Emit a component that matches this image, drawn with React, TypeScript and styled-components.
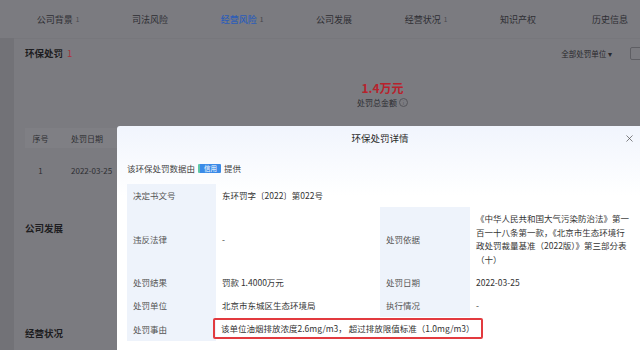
import { X } from "lucide-react"
import styled, { createGlobalStyle } from "styled-components"

const tabs = [
  { name: "公司背景", count: 1 },
  { name: "司法风险" },
  { name: "经营风险", count: 1, active: true },
  { name: "公司发展" },
  { name: "经营状况", count: 1 },
  { name: "知识产权" },
  { name: "历史信息" },
]

const basis =
  "《中华人民共和国大气污染防治法》第一百一十八条第一款，《北京市生态环境行政处罚裁量基准（2022版）》第三部分表（十）"

const App = () => {
  return (
    <Page>
      <GlobalStyle />
      <TabBar>
        {tabs.map(tab => (
          <Tab key={tab.name} $active={tab.active}>
            {tab.name}
            {tab.count && <TabCount>{tab.count}</TabCount>}
          </Tab>
        ))}
      </TabBar>

      <Main>
        <Card>
          <HeadRow>
            <SectionTitle>
              环保处罚<RedCount>1</RedCount>
            </SectionTitle>
            <HeadTools>
              <Dropdown>全部处罚单位 ▾</Dropdown>
              <ToolBox />
            </HeadTools>
          </HeadRow>

          <Summary>
            <Amount>1.4万元</Amount>
            <AmountLabel>
              处罚总金额 <InfoDot>i</InfoDot>
            </AmountLabel>
          </Summary>

          <ListTable>
            <ListHead>
              <IndexCell>序号</IndexCell>
              <DateCell>处罚日期</DateCell>
            </ListHead>
            <ListRow>
              <IndexCell>1</IndexCell>
              <DateCell>2022-03-25</DateCell>
            </ListRow>
          </ListTable>

          <SectionTitle $top={29}>公司发展</SectionTitle>
          <SectionTitle $top={91}>经营状况</SectionTitle>
        </Card>
      </Main>

      <Modal>
        <ModalHeader>
          <span />
          <ModalTitle>环保处罚详情</ModalTitle>
          <CloseButton>
            <X size={11} strokeWidth={1.6} />
          </CloseButton>
        </ModalHeader>

        <SourceLine>
          该环保处罚数据由 <SourceBadge>信用</SourceBadge> 提供
        </SourceLine>

        <DetailGrid>
          <Label>决定书文号</Label>
          <Value $span={3}>东环罚字〔2022〕第022号</Value>

          <Label>违反法律</Label>
          <Value>-</Value>
          <Label>处罚依据</Label>
          <Value $tight>{basis}</Value>

          <Label>处罚结果</Label>
          <Value>罚款 1.4000万元</Value>
          <Label>处罚日期</Label>
          <Value>2022-03-25</Value>

          <Label>处罚单位</Label>
          <Value>北京市东城区生态环境局</Value>
          <Label>执行情况</Label>
          <Value>-</Value>

          <Label>处罚事由</Label>
          <Value $span={3} $boxed>
            <Highlight>该单位油烟排放浓度2.6mg/m3， 超过排放限值标准（1.0mg/m3）</Highlight>
          </Value>
        </DetailGrid>
      </Modal>
    </Page>
  )
}

export default App

const GlobalStyle = createGlobalStyle`
  html, body {
    margin: 0;
    padding: 0;
    background: #727277;
    overflow: hidden;
  }
  body {
    font-family: "Noto Sans CJK SC", "Noto Sans", sans-serif;
  }
`

const Page = styled.div`
  position: relative;
  width: 640px;
  height: 350px;
  overflow: hidden;
  background: #727277;
  color: #232327;
`

const TabBar = styled.div`
  display: flex;
  height: 38px;
  padding-left: 12px;
  background: #7b7b80;
`

const Tab = styled.div<{ $active?: boolean }>`
  flex: 0 0 92px;
  display: flex;
  align-items: center;
  justify-content: center;
  font-size: 9px;
  color: ${p => (p.$active ? "#2c5db8" : "#2e2e33")};
  font-weight: ${p => (p.$active ? 500 : 400)};
`

const TabCount = styled.span`
  margin-left: 3px;
  font-size: 6.5px;
  color: #4a4a4f;
`

const Main = styled.div`
  display: flex;
  padding-left: 14px;
  height: 312px;
`

const Card = styled.div`
  flex: 1;
  background: #7b7b80;
  padding: 7px 0 0 11px;
  border-top: 1px solid #77777c;
`

const HeadRow = styled.div`
  display: flex;
  align-items: center;
  justify-content: space-between;
  height: 14px;
`

const SectionTitle = styled.div<{ $top?: number }>`
  font-size: 9.5px;
  font-weight: 700;
  line-height: 14px;
  color: #1d1d21;
  margin-top: ${p => p.$top ?? 0}px;
`

const RedCount = styled.span`
  margin-left: 4px;
  color: #a8323c;
  font-weight: 400;
`

const HeadTools = styled.div`
  display: flex;
  align-items: center;
  gap: 16px;
`

const Dropdown = styled.div`
  font-size: 7.5px;
  color: #28282c;
  margin-right: 2px;
`

const ToolBox = styled.div`
  width: 14px;
  height: 11px;
  border: 1px solid #5e5e63;
  border-radius: 2px;
  margin-right: -6px;
`

const Summary = styled.div`
  display: flex;
  flex-direction: column;
  align-items: center;
  margin-top: 21px;
  padding-left: 100px;
`

const Amount = styled.div`
  font-size: 12px;
  font-weight: 700;
  line-height: 14px;
  color: #b8222c;
`

const AmountLabel = styled.div`
  display: flex;
  align-items: center;
  gap: 2px;
  font-size: 8px;
  line-height: 15px;
  color: #2c2c30;
`

const InfoDot = styled.span`
  width: 7px;
  height: 7px;
  border: 1px solid #55555a;
  border-radius: 50%;
  font-size: 5px;
  line-height: 7px;
  text-align: center;
  color: #55555a;
`

const ListTable = styled.div`
  margin-top: 18px;
  font-size: 8px;
`

const ListHead = styled.div`
  display: flex;
  align-items: center;
  height: 20px;
  background: #7f7f84;
  color: #2e2e32;
`

const ListRow = styled.div`
  display: flex;
  align-items: center;
  height: 44px;
  color: #2e2e32;
`

const IndexCell = styled.div`
  width: 31px;
  text-align: center;
`

const DateCell = styled.div`
  padding-left: 15px;
`

const Modal = styled.div`
  position: fixed;
  left: 117px;
  top: 126px;
  width: 526px;
  bottom: 0;
  background: linear-gradient(180deg, #f1f5fd 0%, #ffffff 70px);
  border-radius: 3px 3px 0 0;
  font-size: 8.5px;
  color: #333;
`

const ModalHeader = styled.div`
  display: grid;
  grid-template-columns: 1fr auto 1fr;
  align-items: center;
  height: 24px;
  padding: 0 8px;
`

const ModalTitle = styled.div`
  font-size: 9.5px;
  color: #2a2a2a;
`

const CloseButton = styled.div`
  justify-self: end;
  display: flex;
  color: #555;
`

const SourceLine = styled.div`
  display: flex;
  align-items: center;
  gap: 3px;
  margin-top: 11px;
  padding-left: 10px;
  line-height: 14px;
  color: #444;
`

const SourceBadge = styled.span`
  display: inline-block;
  height: 9px;
  padding: 0 4px 0 6px;
  font-size: 6.5px;
  line-height: 9px;
  color: #fff;
  background: linear-gradient(90deg, #5fc7a8 0 2px, #3b8be8 2px);
  border-radius: 1px;
`

const DetailGrid = styled.div`
  display: grid;
  grid-template-columns: 89px 164px 90px 163px;
  margin: 9px 0 0 10px;
`

const Label = styled.div`
  display: flex;
  align-items: center;
  padding: 4px 6px;
  line-height: 15px;
  background: #eef3fb;
  color: #555;
`

const Value = styled.div<{ $span?: number; $tight?: boolean; $boxed?: boolean }>`
  display: flex;
  align-items: center;
  grid-column: span ${p => p.$span ?? 1};
  padding: ${p => (p.$boxed ? "1px 6px 2px" : p.$tight ? "5px 4px 5px 6px" : "4px 6px")};
  line-height: ${p => (p.$tight ? "13.5px" : "15px")};
  color: #333;
`

const Highlight = styled.span`
  display: inline-block;
  margin-left: -9px;
  padding: 1px 6px 1px 6px;
  line-height: 15px;
  border: 2px solid #e23a3f;
  border-radius: 2px;
`
